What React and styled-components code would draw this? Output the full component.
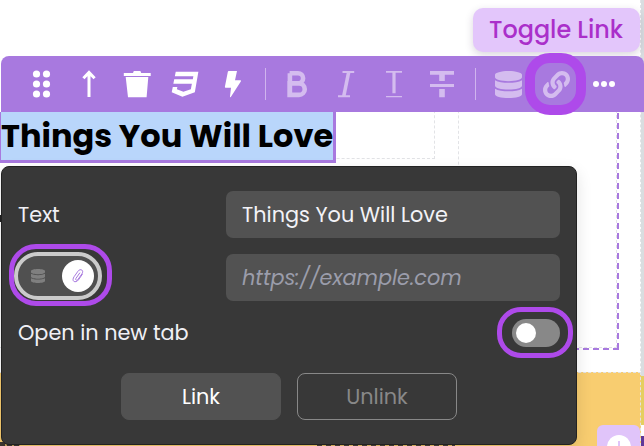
import React from 'react';
import styled, { createGlobalStyle } from 'styled-components';

const GlobalStyle = createGlobalStyle`
  * { box-sizing: border-box; }
  body { margin: 0; background: #fff; overflow: hidden; }
  body, button, input { font-family: Poppins, Inter, sans-serif; }
`;

const Page = styled.main`
  position: relative;
  width: 644px;
  height: 446px;
  overflow: hidden;
  background: #fff;
  padding-top: 56px;
`;

/* Canvas guides lie on a free canvas beneath the editor controls. */
const Guide = styled.div`
  position: absolute;
  left: ${p => p.$x}px;
  top: ${p => p.$y}px;
  width: ${p => p.$w}px;
  height: ${p => p.$h}px;
  border: 0 dashed #e2e3e6;
  border-right-width: 1px;
  border-bottom-width: ${p => (p.$bottom ? 1 : 0)}px;
`;
const Selection = styled.svg`
  position: absolute;
  left: 0;
  top: 100px;
`;
const EdgeStrip = styled.div`
  position: absolute;
  right: 0;
  top: 0;
  width: 3px;
  height: 376px;
  background: #d9dde0;
`;
const Banner = styled.section`
  position: absolute;
  left: 0;
  top: 372px;
  width: 641px;
  height: 74px;
  background: #f8cd70;
  border-top: 1px dashed #e2e3e6;
  border-right: 1px dashed #e2e3e6;
`;
const BannerEdge = styled.div`
  position: absolute;
  right: 0;
  top: 376px;
  width: 3px;
  height: 49px;
  background: #e5cf61;
`;
/* The content that shows past the panel's edges. */
const Sliver = styled.div`
  position: absolute;
  left: ${p => p.$x}px;
  top: ${p => p.$y}px;
  width: ${p => p.$w}px;
  height: ${p => p.$h}px;
  background: ${p => p.$fill};
`;
const AddButton = styled.button`
  position: absolute;
  left: 597px;
  top: 425px;
  width: 43px;
  height: 44px;
  padding: 0;
  border: 0;
  border-radius: 6px;
  background: #e0c4fa;
  display: flex;
  align-items: center;
  justify-content: center;
`;

const Toolbar = styled.nav`
  position: relative;
  display: flex;
  height: 56px;
  margin-left: 1px;
  padding-left: 16px;
  border-radius: 8px 8px 0 0;
  background: #a879df;
`;
const Tool = styled.button`
  position: relative;
  flex: none;
  width: 48px;
  height: 56px;
  padding: 0;
  border: 0;
  background: none;
  display: flex;
  align-items: center;
  justify-content: center;
  color: ${p => (p.$muted ? '#d4bcef' : '#fff')};
`;
const Divider = styled.i`
  flex: none;
  width: 1px;
  height: 32px;
  margin: 12px ${p => p.$after}px 0 ${p => p.$before}px;
  background: #d0b4ee;
`;
const LinkRing = styled.span`
  position: absolute;
  left: -7px;
  top: -3px;
  width: 61px;
  height: 62px;
  border: 10px solid #ae4aea;
  border-radius: 25px;
  z-index: 2;
`;
const Tooltip = styled.div`
  position: absolute;
  left: 473px;
  top: 8px;
  width: 167px;
  height: 44px;
  padding-left: 16px;
  border-radius: 10px;
  background: #e3c6fb;
  box-shadow: 0 3px 9px rgba(50, 30, 70, 0.18);
  color: #aa2fca;
  font-size: 23.9px;
  font-weight: 500;
  line-height: 44px;
  white-space: nowrap;
`;

const Heading = styled.h1`
  position: relative;
  width: 336px;
  height: 51px;
  margin: 0;
  border: solid #a879df;
  border-width: 0 3px 3px 1px;
  background: #b9d6fb;
  color: #000;
  font-size: 32px;
  font-weight: 700;
  line-height: 48px;
  white-space: nowrap;
`;

const Panel = styled.form`
  position: relative;
  width: 576px;
  height: 279px;
  margin: 3px 0 0 1px;
  padding: 24px 16px 0;
  border: 1px solid #222;
  border-radius: 8px;
  background: #383838;
  box-shadow: 0 6px 16px rgba(0, 0, 0, 0.12);
  color: #f0f0f5;
  font-size: 20.8px;
`;
const Row = styled.div`
  display: flex;
  align-items: center;
  justify-content: space-between;
  height: ${p => p.$h}px;
  margin-bottom: ${p => p.$gap}px;
`;
const Label = styled.span`
  line-height: 31px;
  padding-bottom: ${p => p.$lift || 0}px;
  white-space: nowrap;
`;
const Field = styled.input`
  width: 334px;
  height: 47px;
  padding: 0 16px;
  border: 0;
  border-radius: 7px;
  outline: 0;
  background: #525252;
  color: #f3f3f7;
  font-size: 20.8px;
  &::placeholder { color: #9b9dab; opacity: 1; font-style: italic; }
`;
const SourceToggle = styled.div`
  position: relative;
  width: 88px;
  height: 48px;
  margin: -3px 0 0 -4px;
  border: 4px solid #cbcbcb;
  border-radius: 24px;
  background: #505050;
  display: flex;
  align-items: center;
  padding: 0 4px 0 13px;
  justify-content: space-between;
  color: #7f7f7f;
`;
const SourceKnob = styled.span`
  width: 32px;
  height: 32px;
  border-radius: 50%;
  background: #fff;
  color: #a879df;
  display: flex;
  align-items: center;
  justify-content: center;
`;
const Ring = styled.span`
  position: absolute;
  left: ${p => p.$x}px;
  top: ${p => p.$y}px;
  width: ${p => p.$w}px;
  height: ${p => p.$h}px;
  border: 5px solid #ae4aea;
  border-radius: ${p => p.$r}px;
`;
const Switch = styled.div`
  position: relative;
  width: 48px;
  height: 28px;
  padding: 4px;
  border-radius: 14px;
  background: #888;
`;
const SwitchKnob = styled.span`
  display: block;
  width: 20px;
  height: 20px;
  border-radius: 50%;
  background: #fff;
`;
const Actions = styled.div`
  display: flex;
  gap: 16px;
  margin-left: 103px;
`;
const Action = styled.button`
  width: 160px;
  height: 47px;
  padding: 0;
  border: 1px solid ${p => (p.$outline ? '#888' : '#525252')};
  border-radius: 8px;
  background: ${p => (p.$outline ? 'transparent' : '#525252')};
  color: ${p => (p.$outline ? '#888' : '#fff')};
  font-size: 20.8px;
`;

const Icon = ({ children }) => (
  <svg width="28" height="28" viewBox="0 0 28 28" fill="currentColor">{children}</svg>
);
const DB_PATH = 'M448 73.1v45.7C448 159.1 347.7 192 224 192S0 159.1 0 118.9V73.1C0 32.9 100.3 0 224 0s224 32.9 224 73.1zM448 176v102.9c0 40.2-100.3 73.1-224 73.1S0 319.1 0 278.9V176c48.1 33.1 136.2 48.6 224 48.6s175.9-15.5 224-48.6zm0 160v102.9c0 40.2-100.3 73.1-224 73.1S0 479.1 0 438.9V336c48.1 33.1 136.2 48.6 224 48.6s175.9-15.5 224-48.6z';
const DatabaseIcon = ({ w, h }) => (
  <svg width={w} height={h} viewBox="0 0 448 512" preserveAspectRatio="none" fill="currentColor"><path d={DB_PATH} /></svg>
);
const LINK_PATH = 'M326.612 185.391c59.747 59.809 58.927 155.698.36 214.59-.11.12-.24.25-.36.37l-67.2 67.2c-59.27 59.27-155.699 59.262-214.96 0-59.27-59.26-59.27-155.7 0-214.96l37.106-37.106c9.84-9.84 26.786-3.3 27.294 10.606.648 17.722 3.826 35.527 9.69 52.721 1.986 5.822.567 12.262-3.783 16.612l-13.087 13.087c-28.026 28.026-28.905 73.66-1.155 101.96 28.024 28.579 74.086 28.749 102.325.51l67.2-67.19c28.191-28.191 28.073-73.757 0-101.83-3.701-3.694-7.429-6.564-10.341-8.569a16.037 16.037 0 0 1-6.947-12.606c-.396-10.567 3.348-21.456 11.698-29.806l21.054-21.055c5.521-5.521 14.182-6.199 20.584-1.731a152.482 152.482 0 0 1 20.522 17.197zM467.547 44.449c-59.261-59.262-155.69-59.27-214.96 0l-67.2 67.2c-.12.12-.25.25-.36.37-58.566 58.892-59.387 154.781.36 214.59a152.454 152.454 0 0 0 20.521 17.196c6.402 4.468 15.064 3.789 20.584-1.731l21.054-21.055c8.35-8.35 12.094-19.239 11.698-29.806a16.037 16.037 0 0 0-6.947-12.606c-2.912-2.005-6.64-4.875-10.341-8.569-28.073-28.073-28.191-73.639 0-101.83l67.2-67.19c28.239-28.239 74.3-28.069 102.325.51 27.75 28.3 26.872 73.934-1.155 101.96l-13.087 13.087c-4.35 4.35-5.769 10.79-3.783 16.612 5.864 17.194 9.042 34.999 9.69 52.721.509 13.906 17.454 20.446 27.294 10.606l37.106-37.106c59.271-59.259 59.271-155.699.001-214.959z';

export default function App() {
  return (
    <Page>
      <GlobalStyle />
      <EdgeStrip />
      <BannerEdge />
      <Guide $x={0} $y={0} $w={641} $h={446} />
      <Guide $x={0} $y={100} $w={459} $h={80} />
      <Guide $x={0} $y={100} $w={435} $h={59} $bottom />
      <Guide $x={0} $y={100} $w={617} $h={248} $bottom />
      <Selection width="620" height="252" fill="none" stroke="#a879df" strokeWidth="2">
        <path d="M618 13V250" strokeDasharray="6 4" />
        <path d="M0 249H619" strokeDasharray="6 4" strokeDashoffset="7" />
      </Selection>
      <Banner />
      <Sliver $x={0} $y={215} $w={1} $h={7} $fill="#222" />
      <Sliver $x={0} $y={442} $w={20} $h={4} $fill="repeating-linear-gradient(90deg, #3d3832 0 5px, #c6a35a 5px 7px)" />
      <Sliver $x={317} $y={445} $w={138} $h={1} $fill="repeating-linear-gradient(90deg, #4b4438 0 5px, #e7bd66 5px 9px)" />
      <Sliver $x={641} $y={436} $w={3} $h={10} $fill="#5f3899" />
      <AddButton aria-label="Add">
        <svg width="24" height="24" viewBox="0 0 24 24"><circle cx="12" cy="12" r="12" fill="#fff" /><path d="M12 6V18M6 12H18" stroke="#e0c4fa" strokeWidth="2" /></svg>
      </AddButton>

      <Tooltip role="tooltip">Toggle Link</Tooltip>
      <Toolbar>
        <Tool aria-label="Drag"><Icon>{[4, 14, 24].map(y => <React.Fragment key={y}><circle cx="9.5" cy={y} r="3.6" /><circle cx="19.5" cy={y} r="3.6" /></React.Fragment>)}</Icon></Tool>
        <Tool aria-label="Move up"><Icon><path d="M14 27V2.5M8.4 8.3 14 2.5l5.6 5.8" fill="none" stroke="currentColor" strokeWidth="3" /></Icon></Tool>
        <Tool aria-label="Delete"><Icon><path d="M.8 3H10l.8-2h6.6l.8 2h9.5v3H.8zM2.7 7h22.6l-1.7 20.3H5z" /></Icon></Tool>
        <Tool aria-label="Styles"><Icon><path transform="translate(.7 0) scale(.0556)" d="M480 32l-64 368-223.3 80L0 400l19.6-94.8h82l-8 40.6L210 390.2l134.1-44.4 18.8-97.1H29.5l16-82h333.7l10.5-52.7H56.4l16.3-82H480z" /></Icon></Tool>
        <Tool aria-label="Actions"><Icon><path d="M9.8 1H18l-2 9.3h5.5q1 .2.3 1.2l-10 15.5q-.8.8-.8-.5l1-8.8H6.6q-.8 0-.7-1L8.8 2q.1-1 1-1z" /></Icon></Tool>
        <Divider $before={8} $after={7} />
        <Tool $muted aria-label="Bold"><Icon><path d="M6.6 3.2H15a5 5 0 0 1 0 10.2H6.6m0 0H16a5.7 5.7 0 0 1 0 11.5H6.6zM6.9 3.2v21.7" fill="none" stroke="currentColor" strokeWidth="4.6" /></Icon></Tool>
        <Tool $muted aria-label="Italic"><Icon><path d="M11.5 2h11.7M7 26.2h12" fill="none" stroke="currentColor" strokeWidth="2" /><path d="M17.7 2 12.8 26" stroke="currentColor" strokeWidth="3.6" /></Icon></Tool>
        <Tool $muted aria-label="Underline"><Icon><path d="M7 1h16v1.8h-6.4v20.4h-3.2V2.8H7zM7 26h16v1.2H7z" /></Icon></Tool>
        <Tool $muted aria-label="Strikethrough"><Icon><path d="M3 1h24v3.7h-9.2V11h-5.6V4.7H3zM3 14h24v3H3zM12.2 19h5.6v8.2h-5.6z" /></Icon></Tool>
        <Divider $before={10} $after={8} />
        <Tool $muted aria-label="Dynamic data"><DatabaseIcon w={27} h={27} /></Tool>
        <Tool $muted aria-label="Link"><svg width="27" height="27" viewBox="0 0 512 512" fill="currentColor"><path d={LINK_PATH} /></svg><LinkRing /></Tool>
        <Tool aria-label="More"><Icon><circle cx="6" cy="14" r="3" /><circle cx="14" cy="14" r="3" /><circle cx="22" cy="14" r="3" /></Icon></Tool>
      </Toolbar>
      <Heading>Things You Will Love</Heading>

      <Panel onSubmit={e => e.preventDefault()}>
        <Row $h={47} $gap={16}><Label>Text</Label><Field readOnly value="Things You Will Love" /></Row>
        <Row $h={47} $gap={16}>
          <SourceToggle>
            <Ring $x={-9.5} $y={-12} $w={103} $h={61.5} $r={27} />
            <DatabaseIcon w={14} h={14} />
            <SourceKnob>
              <svg width="16" height="16" viewBox="0 0 16 16" fill="none" stroke="currentColor" strokeWidth="1" strokeLinecap="round"><path d="M12.3 6.3 8.5 11.8C7.2 13.7 5 14.2 3.8 13.3S2.9 10.4 4.1 8.7L8 3.2C9 1.7 10.8 1.3 11.9 2.1S12.9 4.4 11.9 5.9L8 11.4C7.4 12.3 6.6 12.5 6 12S5.6 10.8 6.2 10L9.7 5" /></svg>
            </SourceKnob>
          </SourceToggle>
          <Field readOnly placeholder="https://example.com" />
        </Row>
        <Row $h={32} $gap={24}><Label $lift={2}>Open in new tab</Label><Switch><Ring $x={-15} $y={-12} $w={76} $h={51} $r={24} /><SwitchKnob /></Switch></Row>
        <Actions><Action>Link</Action><Action $outline>Unlink</Action></Actions>
      </Panel>
    </Page>
  );
}
